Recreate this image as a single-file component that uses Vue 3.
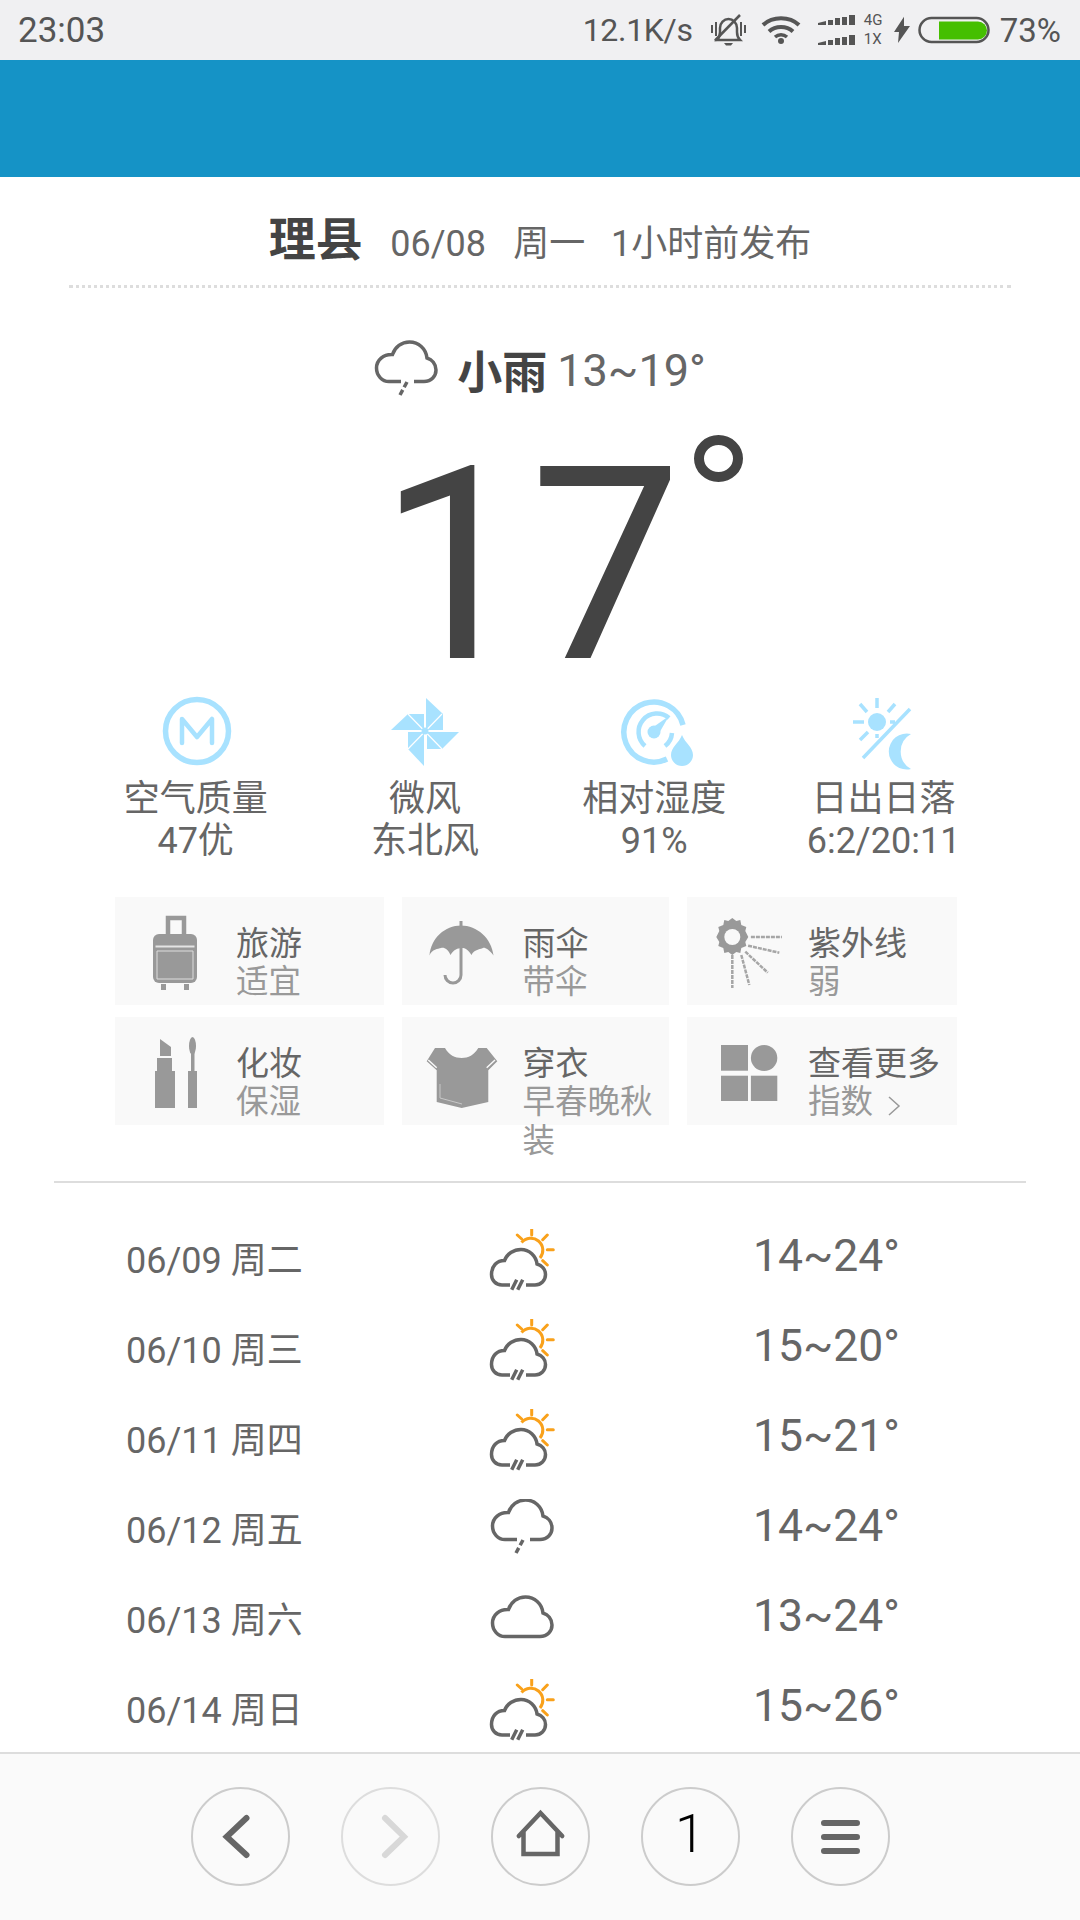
<template>
  <div class="screen">
    <div class="status">
      <span class="clock">23:03</span>
      <div class="status-right">
        <span class="speed">12.1K/s</span>
        <svg class="s-bell" width="35" height="32" viewBox="0 0 35 32">
          <path d="M6 26c2-2 3-4 3-8v-4c0-5 4-9 8.500-9s8.500 4 8.500 9v4c0 4 1 6 3 8z" fill="none" stroke="#555" stroke-width="2.500"/>
          <path d="M13 29h9l-2 2.500h-5z" fill="#555"/>
          <path d="M4 26.500L29 1" stroke="#555" stroke-width="2.500"/>
          <path d="M1 11v8M5 8v14M30 8v14M34 11v8" stroke="#555" stroke-width="2"/>
        </svg>
        <svg class="s-wifi" width="40" height="28" viewBox="0 0 40 28">
          <path d="M2 9C11.500 0 28.500 0 38 9" fill="none" stroke="#555" stroke-width="4"/>
          <path d="M8 15.500C14.500 9.500 25.500 9.500 32 15.500" fill="none" stroke="#555" stroke-width="4"/>
          <path d="M14 21c3.500-3 8.500-3 12 0" fill="none" stroke="#555" stroke-width="3.500"/>
          <circle cx="20" cy="25" r="3" fill="#555"/>
        </svg>
        <svg class="s-signal" width="38" height="30" viewBox="0 0 38 30">
          <path d="M0 8l8-2v4H0zM10 5h5v5h-5zM17 3h5v7h-5zM24 2h5v8h-5zM31 0h6v10h-6z" fill="#555"/>
          <path d="M0 28l8-2v4H0zM10 25h5v5h-5zM17 23h5v7h-5zM24 22h5v8h-5zM31 20h6v10h-6z" fill="#555"/>
        </svg>
        <div class="net"><span>4G</span><span>1X</span></div>
        <svg class="s-bolt" width="17" height="30" viewBox="0 0 17 30">
          <path d="M10 1.700L0 17h5l-1 11 12-17h-6z" fill="#555"/>
        </svg>
        <svg class="s-batt" width="72" height="28" viewBox="0 0 72 28">
          <rect x="1.500" y="2" width="69" height="24" rx="12" fill="none" stroke="#555" stroke-width="2.500"/>
          <path d="M21 5.500h39a8.500 8.500 0 0 1 0 18H21z" fill="#45bf00"/>
        </svg>
        <span class="pct">73%</span>
      </div>
    </div>
    <div class="blue"></div>

    <div class="content">
      <div class="title">
        <b class="city">理县</b>
        <span class="t-date">06/08</span>
        <span class="t-week">周一</span>
        <span>1小时前发布</span>
      </div>

      <div class="now">
        <svg class="now-icon" width="66" height="56" viewBox="0 0 66 56">
          <path class="cloud" d="M27 41.500H15C8 41.500 2.500 35.500 2.500 28C2.500 20 9.500 14 18.500 14.500C21 7 27.500 2 35.500 2C44.500 2 52 8.500 53 18C58 19.500 62 24 62 30C62 36 57.500 41.500 50 41.500H40"/>
          <path class="cloud" d="M33 42L26 55" stroke-dasharray="6 3"/>
        </svg>
        <b>小雨</b>
        <span class="now-range">13~19°</span>
      </div>

      <div class="temp">
        <span class="temp-num">17<i class="deg"></i></span>
      </div>

      <div class="stats">
        <div v-for="s in stats" :key="s.a" class="stat">
          <svg width="70" height="70" viewBox="-35 -35 70 70" class="stat-icon">
            <g v-if="s.icon === 'air'" transform="translate(1 0)">
              <circle r="31.500" fill="none" stroke="#a8e2ff" stroke-width="5.500"/>
              <path d="M-15 12V-12L0 6 15-12V12" fill="none" stroke="#a8e2ff" stroke-width="4.500" stroke-linejoin="round" stroke-linecap="round"/>
            </g>
            <g v-else-if="s.icon === 'wind'" fill="#a8e2ff">
              <path d="M1-33L18-17V-1H1z"/>
              <path d="M2 1H34L17 18H2z"/>
              <path d="M-1 35L-17 18V1H-1z"/>
              <path d="M-34-1L-17-17H-1V-1z"/>
              <path d="M-17-17L17 18M17-17L-17 18" stroke="#fff" stroke-width="1.200"/>
              <circle r="3.500"/>
            </g>
            <g v-else-if="s.icon === 'hum'" transform="translate(0 1)">
              <path d="M29-7A30 30 0 1 0 13 27" fill="none" stroke="#a8e2ff" stroke-width="5.500"/>
              <path d="M15-14A18 18 0 1 0-9 14" fill="none" stroke="#a8e2ff" stroke-width="4.500"/>
              <path d="M18 1A18 18 0 0 1 11 14" fill="none" stroke="#a8e2ff" stroke-width="4.500"/>
              <circle r="6.500" fill="#a8e2ff"/>
              <path d="M-2-4L15-16 4 3z" fill="#a8e2ff"/>
              <path d="M28 3C25 11 17 15 17 23A11 11 0 0 0 39 23C39 15 31 11 28 3z" fill="#a8e2ff"/>
            </g>
            <g v-else fill="#a8e2ff">
              <circle cx="-7" cy="-9" r="9"/>
              <path d="M26-22L-21 27M-7-33V-23M-31-9H-20M-24-27L-17-19M11-27L4-19M-24 9L-16 1M-7 3V7M6-9H11" stroke="#a8e2ff" stroke-width="3.500"/>
              <path d="M27 3A18 18 0 1 0 27 38A20 20 0 0 1 27 3z"/>
            </g>
          </svg>
          <div>{{ s.a }}</div>
          <div>{{ s.b }}</div>
        </div>
      </div>

      <div class="tiles">
        <div v-for="t in tiles" :key="t.a" class="tile">
          <svg width="110" height="108" viewBox="0 0 110 108" class="tile-icon">
            <g v-if="t.icon === 'bag'" fill="#999">
              <path d="M42 38V21h16v17" fill="none" stroke="#999" stroke-width="4.500"/>
              <rect x="27" y="37" width="44" height="49" rx="6"/>
              <path d="M29.500 49.500h39" stroke="#e4e4e4" stroke-width="2"/>
              <path d="M31 54h36v28H31z" fill="#999" stroke="#ddd" stroke-width="1"/>
              <path d="M35 87h5v6h-5zM58 87h5v6h-5z"/>
            </g>
            <g v-else-if="t.icon === 'lip'" fill="#999">
              <path d="M34 22L45 30V39H34z"/>
              <path d="M31 41h15v14H31zM29 54h20v37H29z"/>
              <ellipse cx="66.500" cy="29" rx="3.500" ry="9"/>
              <path d="M65 36h3.500v19H65zM62 54h9v37h-9z"/>
            </g>
            <g v-else-if="t.icon === 'umb'" transform="translate(3 0)">
              <path d="M13.500 58.500C15 41 29 28.500 45 28.500S75.500 41 77.500 58.500C73 52 68 50 67 51S58 52 55.500 58C52 52 48 50.500 45 51S38 52 34.500 58C32 52 28 50 25 51S16 52 13.500 58.500z" fill="#999"/>
              <path d="M45 24V31M45 50V78a8 8 0 0 1-16 0" fill="none" stroke="#999" stroke-width="3"/>
            </g>
            <g v-else-if="t.icon === 'shirt'" transform="translate(3 0)">
              <path d="M19 31H29C33 38 39 41 45.700 41S58 38 62.300 31H70.700L81.300 44.300 72.300 53.300V85L45.700 91 20.700 85V53.300L10.700 44.300z" fill="#999"/>
              <path d="M12.300 43L20.700 50.700M79 43L70.700 50.700" fill="none" stroke="#f9f9f9" stroke-width="1.500"/>
              <path d="M24 67V81L46 87" fill="none" stroke="#c8c8c8" stroke-width="1"/>
            </g>
            <g v-else-if="t.icon === 'uv'" transform="translate(1.300 0)">
              <path d="M33 21l4 3 4-1 1 5 5 2-1 4 3 6-3 5 1 4-5 2-1 5-4-1-4 3-4-3-4 1-1-5-5-2 1-4-3-5 3-6-1-4 5-2 1-5 4 1z" fill="#999"/>
              <circle cx="33" cy="40" r="8" fill="#f9f9f9"/>
              <path d="M51.600 40H82.600M48.800 48.700L80 55.700M46 54.700L68.500 75.700M42 58L50 88M33 58V91" fill="none" stroke="#a6a6a6" stroke-width="2.500" stroke-dasharray="4 1"/>
            </g>
            <g v-else fill="#999" transform="translate(1.300 0)">
              <rect x="21.700" y="28" width="27" height="25.700"/>
              <ellipse cx="64.800" cy="41" rx="13.200" ry="13"/>
              <rect x="21.700" y="58.700" width="27" height="25.300"/>
              <rect x="51.600" y="58.700" width="26.400" height="25.300"/>
            </g>
          </svg>
          <div class="tile-text">
            <div class="tile-a">{{ t.a }}</div>
            <div class="tile-b">{{ t.b }}<svg v-if="t.more" class="more" width="14" height="20" viewBox="0 0 14 20"><path d="M2 1l10 9-10 9" fill="none" stroke="#999" stroke-width="1.500"/></svg></div>
          </div>
        </div>
      </div>

      <div class="divider"></div>

      <div class="days">
        <div v-for="d in days" :key="d.date" class="day">
          <span class="date">{{ d.date }}</span>
          <svg width="80" height="70" viewBox="0 0 80 70" class="day-icon">
            <g v-if="d.icon === 'sun'">
              <path d="M41.500 13.500A11 11 0 1 1 60 29" fill="none" stroke="#f9a11b" stroke-width="3"/>
              <path d="M51.700 0V6M37.300 6L41.700 10M67.300 6L62.700 10.700M67.300 20.700H73.300M62.700 31.700L67.300 36" stroke="#f9a11b" stroke-width="3" stroke-linecap="round"/>
              <path class="cloud" d="M30 56H22C15.500 56 11.500 51 11.500 45.500C11.500 37 17 31.500 24.500 31.500C27 25 33.500 20.500 41 20.500C49.500 20.500 56 27 57 35C62 36.500 65.500 40.500 65.500 45.500C65.500 51.500 61 56 55 56H46" fill="#fff"/>
              <path class="cloud" d="M36.700 50.700L31.700 60.700M42.700 50.700L37.700 60.700" stroke-width="3"/>
            </g>
            <g v-else-if="d.icon === 'rain'" transform="translate(10 -1)">
              <path class="cloud" d="M27 41.500H15C8 41.500 2.500 35.500 2.500 28C2.500 20 9.500 14 18.500 14.500C21 7 27.500 2 35.500 2C44.500 2 52 8.500 53 18C58 19.500 62 24 62 30C62 36 57.500 41.500 50 41.500H40"/>
              <path class="cloud" d="M33 42L26 55" stroke-dasharray="6 3"/>
            </g>
            <path v-else class="cloud" transform="translate(10 6)" d="M15 41.500H50C57.500 41.500 62 36 62 30C62 24 58 19.500 53 18C52 8.500 44.500 2 35.500 2C27.500 2 21 7 18.500 14.500C9.500 14 2.500 20 2.500 28C2.500 35.500 8 41.500 15 41.500Z"/>
          </svg>
          <span class="range">{{ d.range }}</span>
        </div>
      </div>
    </div>

    <div class="nav">
      <button class="nav-btn">
        <svg width="95" height="95" viewBox="2 2 95 95"><path d="M55.500 31L35.700 49.700 55.500 68" fill="none" stroke="#666" stroke-width="6" stroke-linecap="round" stroke-linejoin="miter"/></svg>
      </button>
      <button class="nav-btn off">
        <svg width="95" height="95" viewBox="2 2 95 95"><path d="M44 31L63 49.700 44 68" fill="none" stroke="#d8d8d8" stroke-width="6" stroke-linecap="round" stroke-linejoin="miter"/></svg>
      </button>
      <button class="nav-btn">
        <svg width="95" height="95" viewBox="2 2 95 95"><path d="M27.800 49L49.500 26 71.200 49M32.500 45V67H66.500V45" fill="none" stroke="#666" stroke-width="4.500" stroke-linecap="round"/></svg>
      </button>
      <button class="nav-btn count"><span>1</span></button>
      <button class="nav-btn">
        <svg width="95" height="95" viewBox="2 2 95 95"><path d="M33 36H66M33 50H66M33 64H66" fill="none" stroke="#666" stroke-width="6" stroke-linecap="round"/></svg>
      </button>
    </div>
  </div>
</template>

<script setup>
const stats = [
  { icon: 'air', a: '空气质量', b: '47优' },
  { icon: 'wind', a: '微风', b: '东北风' },
  { icon: 'hum', a: '相对湿度', b: '91%' },
  { icon: 'sun', a: '日出日落', b: '6:2/20:11' }
];

const tiles = [
  { icon: 'bag', a: '旅游', b: '适宜' },
  { icon: 'umb', a: '雨伞', b: '带伞' },
  { icon: 'uv', a: '紫外线', b: '弱' },
  { icon: 'lip', a: '化妆', b: '保湿' },
  { icon: 'shirt', a: '穿衣', b: '早春晚秋装' },
  { icon: 'grid', a: '查看更多', b: '指数', more: true }
];

const days = [
  { date: '06/09 周二', icon: 'sun', range: '14~24°' },
  { date: '06/10 周三', icon: 'sun', range: '15~20°' },
  { date: '06/11 周四', icon: 'sun', range: '15~21°' },
  { date: '06/12 周五', icon: 'rain', range: '14~24°' },
  { date: '06/13 周六', icon: 'cloud', range: '13~24°' },
  { date: '06/14 周日', icon: 'sun', range: '15~26°' }
];
</script>

<style scoped>
.screen {
  width: 1080px;
  height: 1920px;
  display: flex;
  flex-direction: column;
  overflow: hidden;
  background: #fff;
  color: #666;
  font-family: Roboto, "Noto Sans CJK SC", sans-serif;
}
.status {
  height: 60px;
  flex-shrink: 0;
  background: #f0f0f2;
  color: #555;
  font-size: 32px;
  display: flex;
  align-items: center;
  justify-content: space-between;
  padding: 0 19px 0 18px;
}
.clock {
  font-size: 35px;
}
.status-right {
  display: flex;
  align-items: center;
}
.speed {
  letter-spacing: -0.3px;
}
.s-bell { margin-left: 18px; }
.s-wifi { margin-left: 15px; }
.s-signal { margin-left: 17px; }
.net {
  margin-left: 8px;
  width: 22px;
  display: flex;
  flex-direction: column;
  font-size: 15px;
  line-height: 19px;
}
.s-bolt { margin-left: 8px; }
.s-batt { margin-left: 7px; }
.pct {
  margin-left: 10px;
  font-size: 33px;
}
.blue {
  height: 117px;
  flex-shrink: 0;
  background: #1593c6;
}
.content {
  flex: 1;
  min-height: 0;
  overflow: hidden;
}
.title {
  height: 108px;
  margin: 0 69px;
  border-bottom: 3px dotted #ddd;
  display: flex;
  align-items: baseline;
  justify-content: center;
  font-size: 36px;
  line-height: 126px;
}
.city {
  font-size: 47px;
  color: #444;
}
.t-date { margin-left: 27.500px; }
.t-week { margin-left: 27.300px; }
.t-week + span { margin-left: 25.700px; }
.now {
  height: 60px;
  margin-top: 51px;
  display: flex;
  align-items: center;
  justify-content: center;
  font-size: 45px;
}
.now b {
  color: #444;
  margin-left: 17px;
  margin-right: 10px;
}
.now-range {
  margin-top: 2px;
}
.now-icon {
  margin-top: -2px;
}
.cloud {
  fill: none;
  stroke: #666;
  stroke-width: 3.5px;
}
.temp {
  height: 264px;
  margin-top: 32px;
  padding-right: 20px;
  text-align: center;
  color: #444;
  font-size: 270px;
  line-height: 270px;
}
.temp-num {
  position: relative;
}
.deg {
  position: absolute;
  left: 316px;
  top: 27px;
  width: 49px;
  height: 47px;
  box-sizing: border-box;
  border: 10px solid #444;
  border-radius: 50%;
}
.stats {
  margin-top: 1px;
  display: grid;
  grid-template-columns: repeat(4, 229.3px);
  padding-left: 81px;
  text-align: center;
  font-size: 36px;
  line-height: 42px;
}
.stat-icon {
  display: block;
  margin: 0 auto 12px;
  overflow: visible;
}
.tiles {
  margin-top: 35px;
  padding-left: 115px;
  display: grid;
  grid-template-columns: 269px 267px 270px;
  grid-auto-rows: 108px;
  column-gap: 18px;
  row-gap: 12px;
}
.tile {
  background: #f9f9f9;
  display: flex;
}
.tile-icon {
  flex-shrink: 0;
  margin-left: 11px;
}
.tile:nth-child(3n + 2) .tile-icon {
  margin-left: 10.500px;
}
.tile:nth-child(3n) .tile-icon {
  margin-left: 11px;
}
.tile-text {
  min-width: 0;
  padding-top: 27px;
  font-size: 32.500px;
  line-height: 39px;
}
.tile-a {
  color: #666;
  font-size: 33px;
}
.tile-b { color: #999; }
.more {
  margin-left: 14px;
  vertical-align: -3px;
}
.divider {
  height: 2px;
  margin: 56px 54px 0;
  background: #ddd;
}
.days {
  margin-top: 31px;
}
.day {
  height: 90px;
  padding-left: 126px;
  display: grid;
  grid-template-columns: 354px 273px 1fr;
  align-items: center;
  font-size: 36px;
}
.date {
  margin-top: -5px;
}
.day-icon {
  display: block;
  margin-top: 10px;
}
.range {
  font-size: 44.500px;
  margin-top: -7px;
}
.nav {
  height: 168px;
  flex-shrink: 0;
  box-sizing: border-box;
  border-top: 2px solid #ddd;
  background: #fafafa;
  display: flex;
  justify-content: center;
  gap: 51px;
  padding-top: 33px;
}
.nav-btn {
  width: 99px;
  height: 99px;
  padding: 0;
  box-sizing: border-box;
  border: 2px solid #ccc;
  border-radius: 50%;
  background: none;
  display: flex;
  align-items: center;
  justify-content: center;
}
.nav-btn.off {
  border-color: #ddd;
}
.count {
  font-family: Roboto, sans-serif;
  font-weight: 300;
  font-size: 54px;
  color: #000;
  padding-bottom: 6px;
}
</style>
